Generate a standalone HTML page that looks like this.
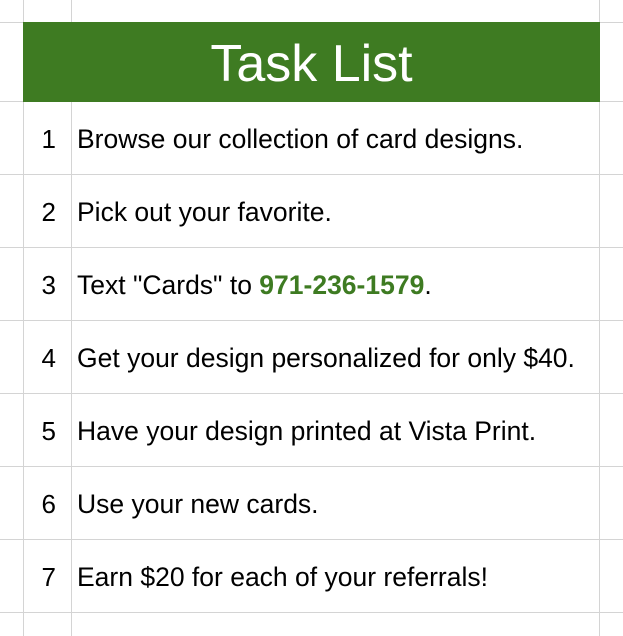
<!DOCTYPE html>
<html><head><style>
body{margin:0;width:623px;height:636px;background:#fff;position:relative;overflow:hidden;font-family:"Liberation Sans",sans-serif;}
.v{position:absolute;top:0;width:1px;height:636px;background:#d4d4d4}
.h{position:absolute;left:0;width:623px;height:1px;background:#d4d4d4}
.hdr{position:absolute;left:23px;top:22px;width:577px;height:80px;background:#3e7b22;color:#fff;font-size:52px;text-align:center;line-height:84px}
.n{position:absolute;left:24px;width:32px;text-align:right;font-size:26px;color:#000}
.t{position:absolute;left:77px;font-size:26.5px;color:#000;white-space:nowrap;letter-spacing:0}
b{color:#3e7b22}
</style></head><body>
<div class="v" style="left:23px"></div><div class="v" style="left:71px"></div><div class="v" style="left:599px"></div>
<div class="h" style="top:22px"></div><div class="h" style="top:101px"></div><div class="h" style="top:174px"></div><div class="h" style="top:247px"></div><div class="h" style="top:320px"></div><div class="h" style="top:393px"></div><div class="h" style="top:466px"></div><div class="h" style="top:539px"></div><div class="h" style="top:612px"></div>
<div class="hdr">Task List</div>
<div class="n" style="top:124px">1</div><div class="t" style="top:124px">Browse our collection of card designs.</div>
<div class="n" style="top:197px">2</div><div class="t" style="top:197px">Pick out your favorite.</div>
<div class="n" style="top:270px">3</div><div class="t" style="top:270px">Text "Cards" to <b>971-236-1579</b>.</div>
<div class="n" style="top:343px">4</div><div class="t" style="top:343px">Get your design personalized for only $40.</div>
<div class="n" style="top:416px">5</div><div class="t" style="top:416px">Have your design printed at Vista Print.</div>
<div class="n" style="top:489px">6</div><div class="t" style="top:489px">Use your new cards.</div>
<div class="n" style="top:562px">7</div><div class="t" style="top:562px">Earn $20 for each of your referrals!</div>
</body></html>
